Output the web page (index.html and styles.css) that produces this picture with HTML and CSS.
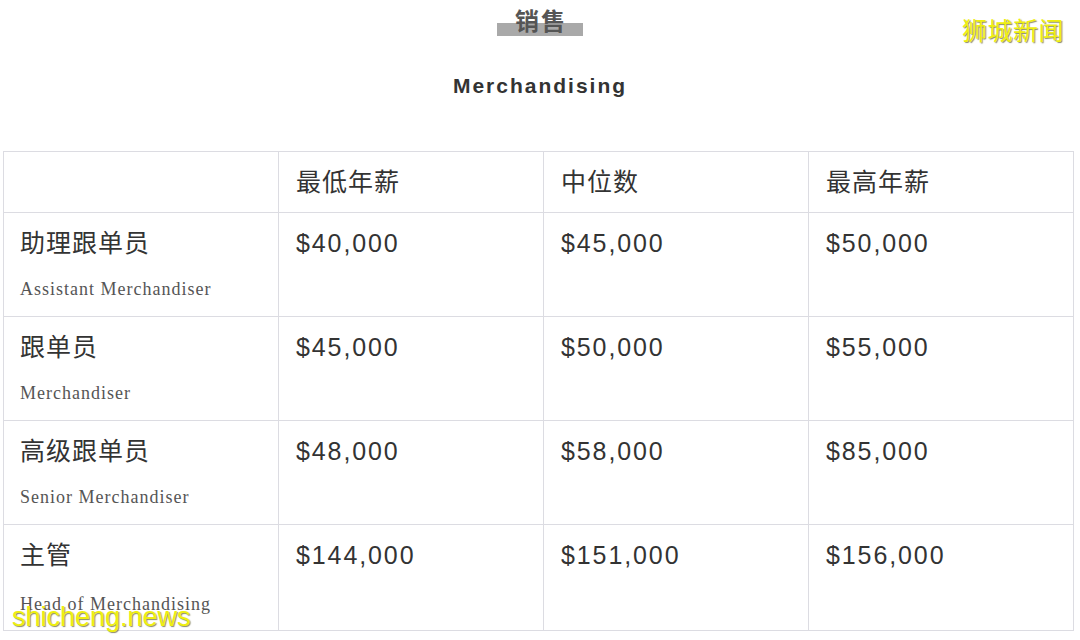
FILE: index.html
```html
<!DOCTYPE html>
<html lang="zh">
<head>
<meta charset="utf-8">
<title>销售 Merchandising</title>
<link rel="stylesheet" href="styles.css">
</head>
<body>
<div class="page">
  <header class="heading">
    <div class="title-row"><span class="title">销售</span></div>
    <h2 class="subtitle">Merchandising</h2>
  </header>
  <table class="salary">
    <colgroup>
      <col class="c-role">
      <col class="c-val">
      <col class="c-val">
      <col class="c-val">
    </colgroup>
    <thead>
      <tr>
        <th class="role"></th>
        <th>最低年薪</th>
        <th>中位数</th>
        <th>最高年薪</th>
      </tr>
    </thead>
    <tbody>
      <tr>
        <td class="role"><div class="zh">助理跟单员</div><div class="en">Assistant Merchandiser</div></td>
        <td>$40,000</td>
        <td>$45,000</td>
        <td>$50,000</td>
      </tr>
      <tr>
        <td class="role"><div class="zh">跟单员</div><div class="en">Merchandiser</div></td>
        <td>$45,000</td>
        <td>$50,000</td>
        <td>$55,000</td>
      </tr>
      <tr>
        <td class="role"><div class="zh">高级跟单员</div><div class="en">Senior Merchandiser</div></td>
        <td>$48,000</td>
        <td>$58,000</td>
        <td>$85,000</td>
      </tr>
      <tr class="last">
        <td class="role"><div class="zh">主管</div><div class="en">Head of Merchandising</div></td>
        <td>$144,000</td>
        <td>$151,000</td>
        <td>$156,000</td>
      </tr>
    </tbody>
  </table>
  <div class="wm wm-top">狮城新闻</div>
  <div class="wm wm-bottom">shicheng.news</div>
</div>
</body>
</html>
```

FILE: styles.css
```css
* { box-sizing: border-box; }

html, body {
  margin: 0;
  padding: 0;
  background: #ffffff;
}

body {
  font-family: "Liberation Sans", "Noto Sans CJK SC", sans-serif;
  color: #333333;
  width: 1080px;
  height: 640px;
  overflow: hidden;
}

.page {
  position: relative;
  width: 1080px;
  height: 640px;
}

.heading {
  padding-top: 5px;
  text-align: center;
}

.title-row {
  height: 31px;
}

.title {
  display: inline-block;
  height: 31px;
  padding: 0 16px 0 18px;
  font-family: "Noto Sans CJK SC", sans-serif;
  font-weight: 700;
  font-size: 24px;
  line-height: 30px;
  letter-spacing: 2px;
  color: #555555;
  background: linear-gradient(to bottom, transparent 18px, #a9a9a9 18px);
}

.subtitle {
  margin: 35px 0 0 0;
  font-size: 21px;
  line-height: 30px;
  font-weight: 700;
  letter-spacing: 2px;
  color: #333333;
}

.salary {
  margin: 50px 0 0 3px;
  width: 1071px;
  border-collapse: collapse;
  table-layout: fixed;
}

.c-role { width: 275px; }
.c-val { width: 265px; }

.salary th,
.salary td {
  border: 1px solid #dcdce2;
  text-align: left;
  vertical-align: top;
  font-weight: 400;
  font-size: 25px;
  line-height: 34px;
  letter-spacing: 1.9px;
  color: #333333;
  padding: 13px 10px 15px 17px;
}

.salary th {
  padding-top: 13px;
  padding-bottom: 13px;
  letter-spacing: 1px;
}

.salary .role {
  padding-left: 16px;
}

.zh {
  letter-spacing: 1px;
}

.en {
  margin-top: 17px;
  font-family: "Liberation Serif", serif;
  font-size: 18px;
  line-height: 24px;
  letter-spacing: 1px;
  color: #555555;
}

.last td {
  padding-bottom: 14px;
}

.last .en {
  margin-top: 20px;
}

.wm {
  position: absolute;
  color: #efef10;
  text-shadow: 1px 1px 1px rgba(90, 90, 40, 0.7);
  line-height: 1;
  white-space: nowrap;
}

.wm-top {
  top: 17px;
  left: 962px;
  font-family: "Noto Sans CJK SC", sans-serif;
  font-size: 25px;
  letter-spacing: 0.5px;
}

.wm-bottom {
  top: 604px;
  left: 12px;
  font-family: "Liberation Sans", sans-serif;
  font-size: 27px;
}
```
